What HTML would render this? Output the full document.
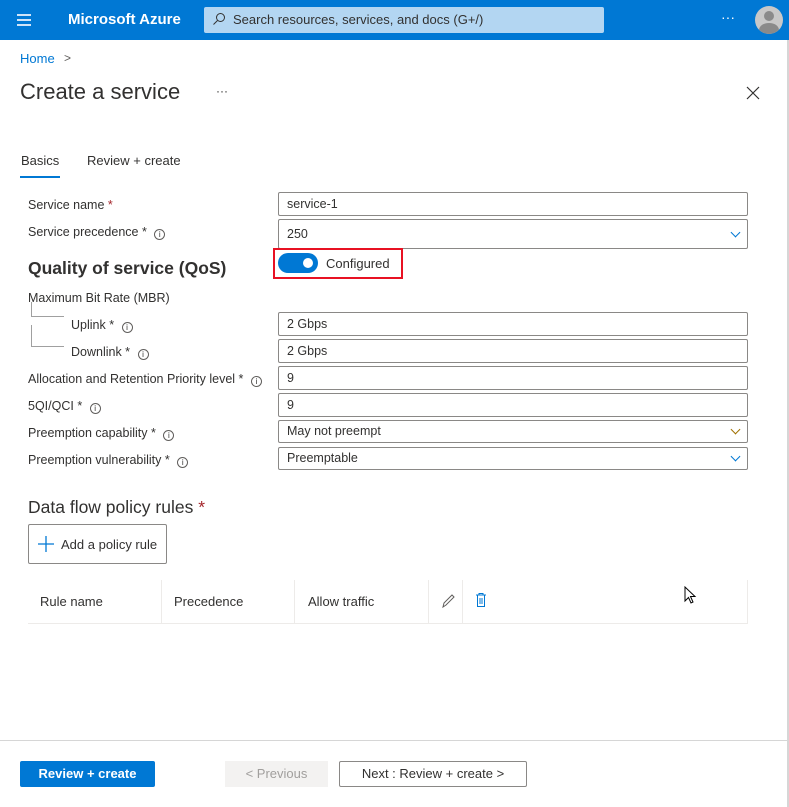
<!DOCTYPE html>
<html><head><style>
*{margin:0;padding:0;box-sizing:border-box}
body{width:789px;height:807px;background:#fff;font-family:"Liberation Sans",sans-serif;color:#323130;position:relative;overflow:hidden;font-size:13px}
.a{position:absolute;white-space:nowrap}
.in{position:absolute;left:278px;width:470px;border:1px solid #8a8886;border-radius:2px;padding-left:8px;font-size:12.5px;line-height:22px;height:24px}
.lbl{position:absolute;left:28px;font-size:12.5px}
.i{display:inline-block;width:11px;height:11px;border:1px solid #605e5c;border-radius:50%;font-size:8px;line-height:9px;text-align:center;margin-left:4px;vertical-align:-1px}
.chev{position:absolute;right:8px;top:7px;width:7px;height:7px;border-right:1.3px solid #0078d4;border-bottom:1.3px solid #0078d4;transform:rotate(45deg)}
.chev.y{border-color:#a07000}
</style></head><body>
<div class="a" style="left:0;top:0;width:789px;height:40px;background:#0078d4"></div>
<div class="a" style="left:17px;top:14px;width:14px;height:2px;background:#cfe4f8;box-shadow:0 5px 0 #cfe4f8,0 10px 0 #cfe4f8"></div>
<div class="a" style="left:68px;top:11px;color:#fff;font-weight:bold;font-size:15px">Microsoft Azure</div>
<div class="a" style="left:204px;top:7px;width:400px;height:26px;background:#b3d6f2;border-radius:2px"></div>
<svg class="a" style="left:212px;top:12px" width="14" height="14"><circle cx="8.5" cy="5.5" r="4" fill="none" stroke="#323130" stroke-width="1"/><line x1="5.5" y1="8.5" x2="1.5" y2="12.5" stroke="#323130"/></svg>
<div class="a" style="left:233px;top:12px;font-size:13px;color:#323130">Search resources, services, and docs (G+/)</div>
<div class="a" style="left:721px;top:9px;color:#fff;font-size:14px">···</div>
<div class="a" style="left:755px;top:6px;width:28px;height:28px;border-radius:50%;background:#c8c8c8;overflow:hidden"><div style="position:absolute;left:9px;top:5px;width:10px;height:10px;border-radius:50%;background:#8a8a8a"></div><div style="position:absolute;left:4px;top:17px;width:20px;height:14px;border-radius:50%;background:#8a8a8a"></div></div>
<div class="a" style="left:20px;top:51px;color:#0078d4;font-size:13px">Home</div>
<div class="a" style="left:64px;top:51px;color:#605e5c;font-size:12px">&gt;</div>
<div class="a" style="left:20px;top:79px;font-size:22px;color:#323130">Create a service</div>
<div class="a" style="left:216px;top:84px;font-size:12px">···</div>
<svg class="a" style="left:746px;top:86px" width="14" height="14"><path d="M1 1L13 13M13 1L1 13" stroke="#323130" stroke-width="1.2"/></svg>
<div class="a" style="left:21px;top:153px;font-size:13px">Basics</div>
<div class="a" style="left:20px;top:176px;width:40px;height:2px;background:#0078d4"></div>
<div class="a" style="left:87px;top:153px;font-size:13px">Review + create</div>

<div class="lbl" style="top:198px">Service name <span style="color:#a4262c">*</span></div>
<div class="in" style="top:192px">service-1</div>
<div class="lbl" style="top:225px">Service precedence * <span class="i">i</span></div>
<div class="in" style="top:219px;height:30px;line-height:28px">250<div class="chev" style="top:9px"></div></div>
<div class="a" style="left:28px;top:258px;font-size:17.5px;font-weight:bold;color:#323130">Quality of service (QoS)</div>
<div class="a" style="left:273px;top:248px;width:130px;height:31px;border:2px solid #e81123"></div>
<div class="a" style="left:278px;top:253px;width:40px;height:20px;border-radius:10px;background:#0078d4"><div style="position:absolute;right:5px;top:5px;width:10px;height:10px;border-radius:50%;background:#fff"></div></div>
<div class="a" style="left:326px;top:256px;font-size:13px">Configured</div>
<div class="lbl" style="top:291px">Maximum Bit Rate (MBR)</div>
<div class="a" style="left:31px;top:302px;width:33px;height:15px;border-left:1px solid #a0a0a0;border-bottom:1px solid #a0a0a0"></div>
<div class="a" style="left:31px;top:325px;width:33px;height:22px;border-left:1px solid #a0a0a0;border-bottom:1px solid #a0a0a0"></div>
<div class="lbl" style="left:71px;top:318px">Uplink * <span class="i">i</span></div>
<div class="in" style="top:312px">2 Gbps</div>
<div class="lbl" style="left:71px;top:345px">Downlink * <span class="i">i</span></div>
<div class="in" style="top:339px">2 Gbps</div>
<div class="lbl" style="top:372px">Allocation and Retention Priority level * <span class="i">i</span></div>
<div class="in" style="top:366px">9</div>
<div class="lbl" style="top:399px">5QI/QCI * <span class="i">i</span></div>
<div class="in" style="top:393px">9</div>
<div class="lbl" style="top:426px">Preemption capability * <span class="i">i</span></div>
<div class="in" style="top:420px;height:23px;line-height:21px">May not preempt<div class="chev y" style="top:5px"></div></div>
<div class="lbl" style="top:453px">Preemption vulnerability * <span class="i">i</span></div>
<div class="in" style="top:447px;height:23px;line-height:21px">Preemptable<div class="chev" style="top:5px"></div></div>

<div class="a" style="left:28px;top:497px;font-size:17.5px;color:#323130">Data flow policy rules <span style="color:#a4262c">*</span></div>
<div class="a" style="left:28px;top:524px;width:139px;height:40px;border:1px solid #8a8886;border-radius:2px"></div>
<svg class="a" style="left:37px;top:535px" width="18" height="18"><path d="M9 1V17M1 9H17" stroke="#0078d4" stroke-width="1.3"/></svg>
<div class="a" style="left:61px;top:537px;font-size:13px">Add a policy rule</div>
<div class="a" style="left:28px;top:623px;width:720px;height:1px;background:#edebe9"></div>
<div class="a" style="left:161px;top:580px;width:1px;height:43px;background:#edebe9"></div>
<div class="a" style="left:294px;top:580px;width:1px;height:43px;background:#edebe9"></div>
<div class="a" style="left:428px;top:580px;width:1px;height:43px;background:#edebe9"></div>
<div class="a" style="left:462px;top:580px;width:1px;height:43px;background:#edebe9"></div>
<div class="a" style="left:747px;top:580px;width:1px;height:43px;background:#edebe9"></div>
<div class="a" style="left:40px;top:594px;font-size:13px">Rule name</div>
<div class="a" style="left:174px;top:594px;font-size:13px">Precedence</div>
<div class="a" style="left:308px;top:594px;font-size:13px">Allow traffic</div>
<svg class="a" style="left:441px;top:593px" width="14" height="16"><path d="M2 14L3 10L11 2L13 4L5 12Z" fill="none" stroke="#605e5c"/></svg>
<svg class="a" style="left:474px;top:592px" width="14" height="16"><path d="M2 3H12M5 3V1.5H9V3M3.5 3.5V14.5H10.5V3.5M6 6V12M8 6V12" fill="none" stroke="#0078d4"/></svg>
<svg class="a" style="left:684px;top:586px" width="14" height="20"><path d="M1 1V15L4.5 11.5L7 17L9 16L6.5 10.5H11Z" fill="#fff" stroke="#000"/></svg>

<div class="a" style="left:0;top:740px;width:789px;height:1px;background:#d6d6d6"></div>
<div class="a" style="left:20px;top:761px;width:135px;height:26px;background:#0078d4;border-radius:2px;color:#fff;font-weight:bold;font-size:13px;text-align:center;line-height:26px">Review + create</div>
<div class="a" style="left:225px;top:761px;width:103px;height:26px;background:#f3f2f1;color:#a19f9d;font-size:13px;text-align:center;line-height:26px">&lt; Previous</div>
<div class="a" style="left:339px;top:761px;width:188px;height:26px;border:1px solid #8a8886;border-radius:2px;font-size:13px;text-align:center;line-height:24px">Next : Review + create &gt;</div>
<div class="a" style="left:787px;top:40px;width:2px;height:767px;background:#d6d6d6"></div>
</body></html>
